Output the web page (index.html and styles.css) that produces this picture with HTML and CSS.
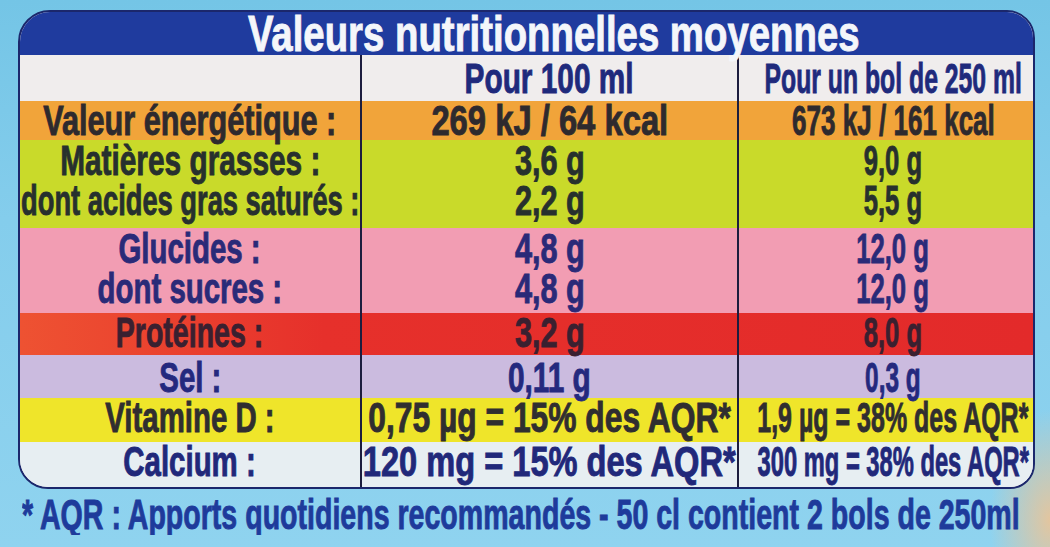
FILE: index.html
```html
<!DOCTYPE html>
<html lang="fr">
<head>
<meta charset="utf-8">
<title>Valeurs nutritionnelles moyennes</title>
<link rel="stylesheet" href="styles.css">
</head>
<body>
<main class="label">
  <section class="panel">
    <h1 class="title"><span class="t">Valeurs nutritionnelles moyennes</span></h1>

    <div class="row row-head">
      <div class="cell c1"></div>
      <div class="cell c2"><span class="t s71">Pour 100 ml</span></div>
      <div class="cell c3"><span class="t s59">Pour un bol de 250 ml</span></div>
    </div>

    <div class="row row-energy">
      <div class="cell c1"><span class="t s73">Valeur énergétique :</span></div>
      <div class="cell c2"><span class="t s78">269 kJ / 64 kcal</span></div>
      <div class="cell c3"><span class="t s62">673 kJ / 161 kcal</span></div>
    </div>

    <div class="row row-fat">
      <div class="cell c1">
        <span class="t s71">Matières grasses :</span>
        <span class="t s65">dont acides gras saturés :</span>
      </div>
      <div class="cell c2">
        <span class="t">3,6 g</span>
        <span class="t">2,2 g</span>
      </div>
      <div class="cell c3">
        <span class="t">9,0 g</span>
        <span class="t">5,5 g</span>
      </div>
    </div>

    <div class="row row-carb">
      <div class="cell c1">
        <span class="t">Glucides :</span>
        <span class="t">dont sucres :</span>
      </div>
      <div class="cell c2">
        <span class="t">4,8 g</span>
        <span class="t">4,8 g</span>
      </div>
      <div class="cell c3">
        <span class="t">12,0 g</span>
        <span class="t">12,0 g</span>
      </div>
    </div>

    <div class="row row-prot">
      <div class="cell c1"><span class="t s68">Protéines :</span></div>
      <div class="cell c2"><span class="t">3,2 g</span></div>
      <div class="cell c3"><span class="t">8,0 g</span></div>
    </div>

    <div class="row row-salt">
      <div class="cell c1"><span class="t">Sel :</span></div>
      <div class="cell c2"><span class="t s71">0,11 g</span></div>
      <div class="cell c3"><span class="t s58">0,3 g</span></div>
    </div>

    <div class="row row-vitd">
      <div class="cell c1"><span class="t">Vitamine D :</span></div>
      <div class="cell c2"><span class="t s76">0,75 µg = 15% des AQR*</span></div>
      <div class="cell c3"><span class="t s595">1,9 µg = 38% des AQR*</span></div>
    </div>

    <div class="row row-calc">
      <div class="cell c1"><span class="t">Calcium :</span></div>
      <div class="cell c2"><span class="t s775">120 mg = 15% des AQR*</span></div>
      <div class="cell c3"><span class="t s565">300 mg = 38% des AQR*</span></div>
    </div>
  </section>

  <p class="note"><span class="t">* AQR : Apports quotidiens recommandés - 50 cl contient 2 bols de 250ml</span></p>
</main>
</body>
</html>
```

FILE: styles.css
```css
html, body {
  margin: 0;
  padding: 0;
}

body {
  width: 1050px;
  height: 547px;
  overflow: hidden;
  font-family: "Liberation Sans", Arial, sans-serif;
  font-weight: 700;
  background:
    radial-gradient(ellipse 60px 110px at 1050px 520px, rgba(236, 196, 150, 0.9), rgba(236, 196, 150, 0) 100%),
    linear-gradient(180deg, #74c5e6 0%, #84cdec 40%, #8fd3ef 100%);
}

.label {
  padding: 10px 15px 0 18px;
}

.panel {
  box-sizing: border-box;
  width: 1017px;
  border: 2px solid #1b276c;
  border-radius: 32px 28px 25px 30px;
  overflow: hidden;
  background: #efecec;
}

.t {
  display: inline-block;
  white-space: nowrap;
  transform: scaleX(var(--sx, 0.7));
  transform-origin: 50% 50%;
  -webkit-text-stroke: 0.9px currentColor;
}

.title {
  box-sizing: border-box;
  margin: 0;
  height: 43px;
  padding: 1px 0 0 54px;
  display: flex;
  justify-content: center;
  background: #1f3b9e;
  color: #f4f6fa;
  font-size: 50px;
  line-height: 43px;
  font-weight: 700;
}

.title .t {
  --sx: 0.767;
}

.row {
  display: grid;
  grid-template-columns: 342px 377px minmax(0, 1fr);
}

.cell {
  box-sizing: border-box;
  min-width: 0;
  display: flex;
  flex-direction: column;
  justify-content: flex-end;
  align-items: center;
  font-size: 42px;
  line-height: 40px;
  padding-bottom: var(--pb, 2px);
}

.c1,
.c2 {
  border-right: 2px solid #1c1d3e;
}

.c1 .t { --sx: 0.70; }
.c2 .t { --sx: 0.73; }
.c3 .t { --sx: 0.61; }

.c3 {
  padding-left: 14px;
}

.cell .s58 { --sx: 0.58; }
.cell .s565 { --sx: 0.565; }
.cell .s59 { --sx: 0.59; }
.cell .s595 { --sx: 0.595; }
.cell .s62 { --sx: 0.62; }
.cell .s65 { --sx: 0.65; }
.cell .s68 { --sx: 0.68; }
.cell .s71 { --sx: 0.71; }
.cell .s73 { --sx: 0.73; }
.cell .s76 { --sx: 0.757; }
.cell .s775 { --sx: 0.776; }
.cell .s78 { --sx: 0.78; }

.row-head {
  height: 46px;
  background: #f0eded;
  color: #1f2a7c;
  --pb: 2.5px;
}

.row-energy {
  height: 39px;
  background: #f1a43a;
  color: #2e2a2e;
  --pb: 1.5px;
}

.row-fat {
  height: 88px;
  background: #c9da2a;
  color: #27302e;
  --pb: 7.5px;
}

.row-carb {
  height: 85px;
  background: #f29db3;
  color: #2a2a78;
  --pb: 4.5px;
}

.row-prot {
  height: 42px;
  background: linear-gradient(90deg, #ee5232 0%, #e6302b 30%, #e32a2a 100%);
  color: #3a2030;
  --pb: 2.5px;
}

.row-salt {
  height: 43px;
  background: #cbbbdf;
  color: #24297e;
  --pb: 0.5px;
}

.row-vitd {
  height: 44px;
  background: #efe52a;
  color: #302e30;
  --pb: 4.5px;
}

.row-calc {
  height: 45px;
  background: #e7eef2;
  color: #21287a;
  --pb: 6.5px;
}

.note {
  width: 1017px;
  overflow: hidden;
  margin: 6px 0 0 4px;
  font-size: 42px;
  line-height: 40px;
  color: #1e3b9b;
}

.note .t {
  --sx: 0.68;
  transform-origin: 0 50%;
}
```
